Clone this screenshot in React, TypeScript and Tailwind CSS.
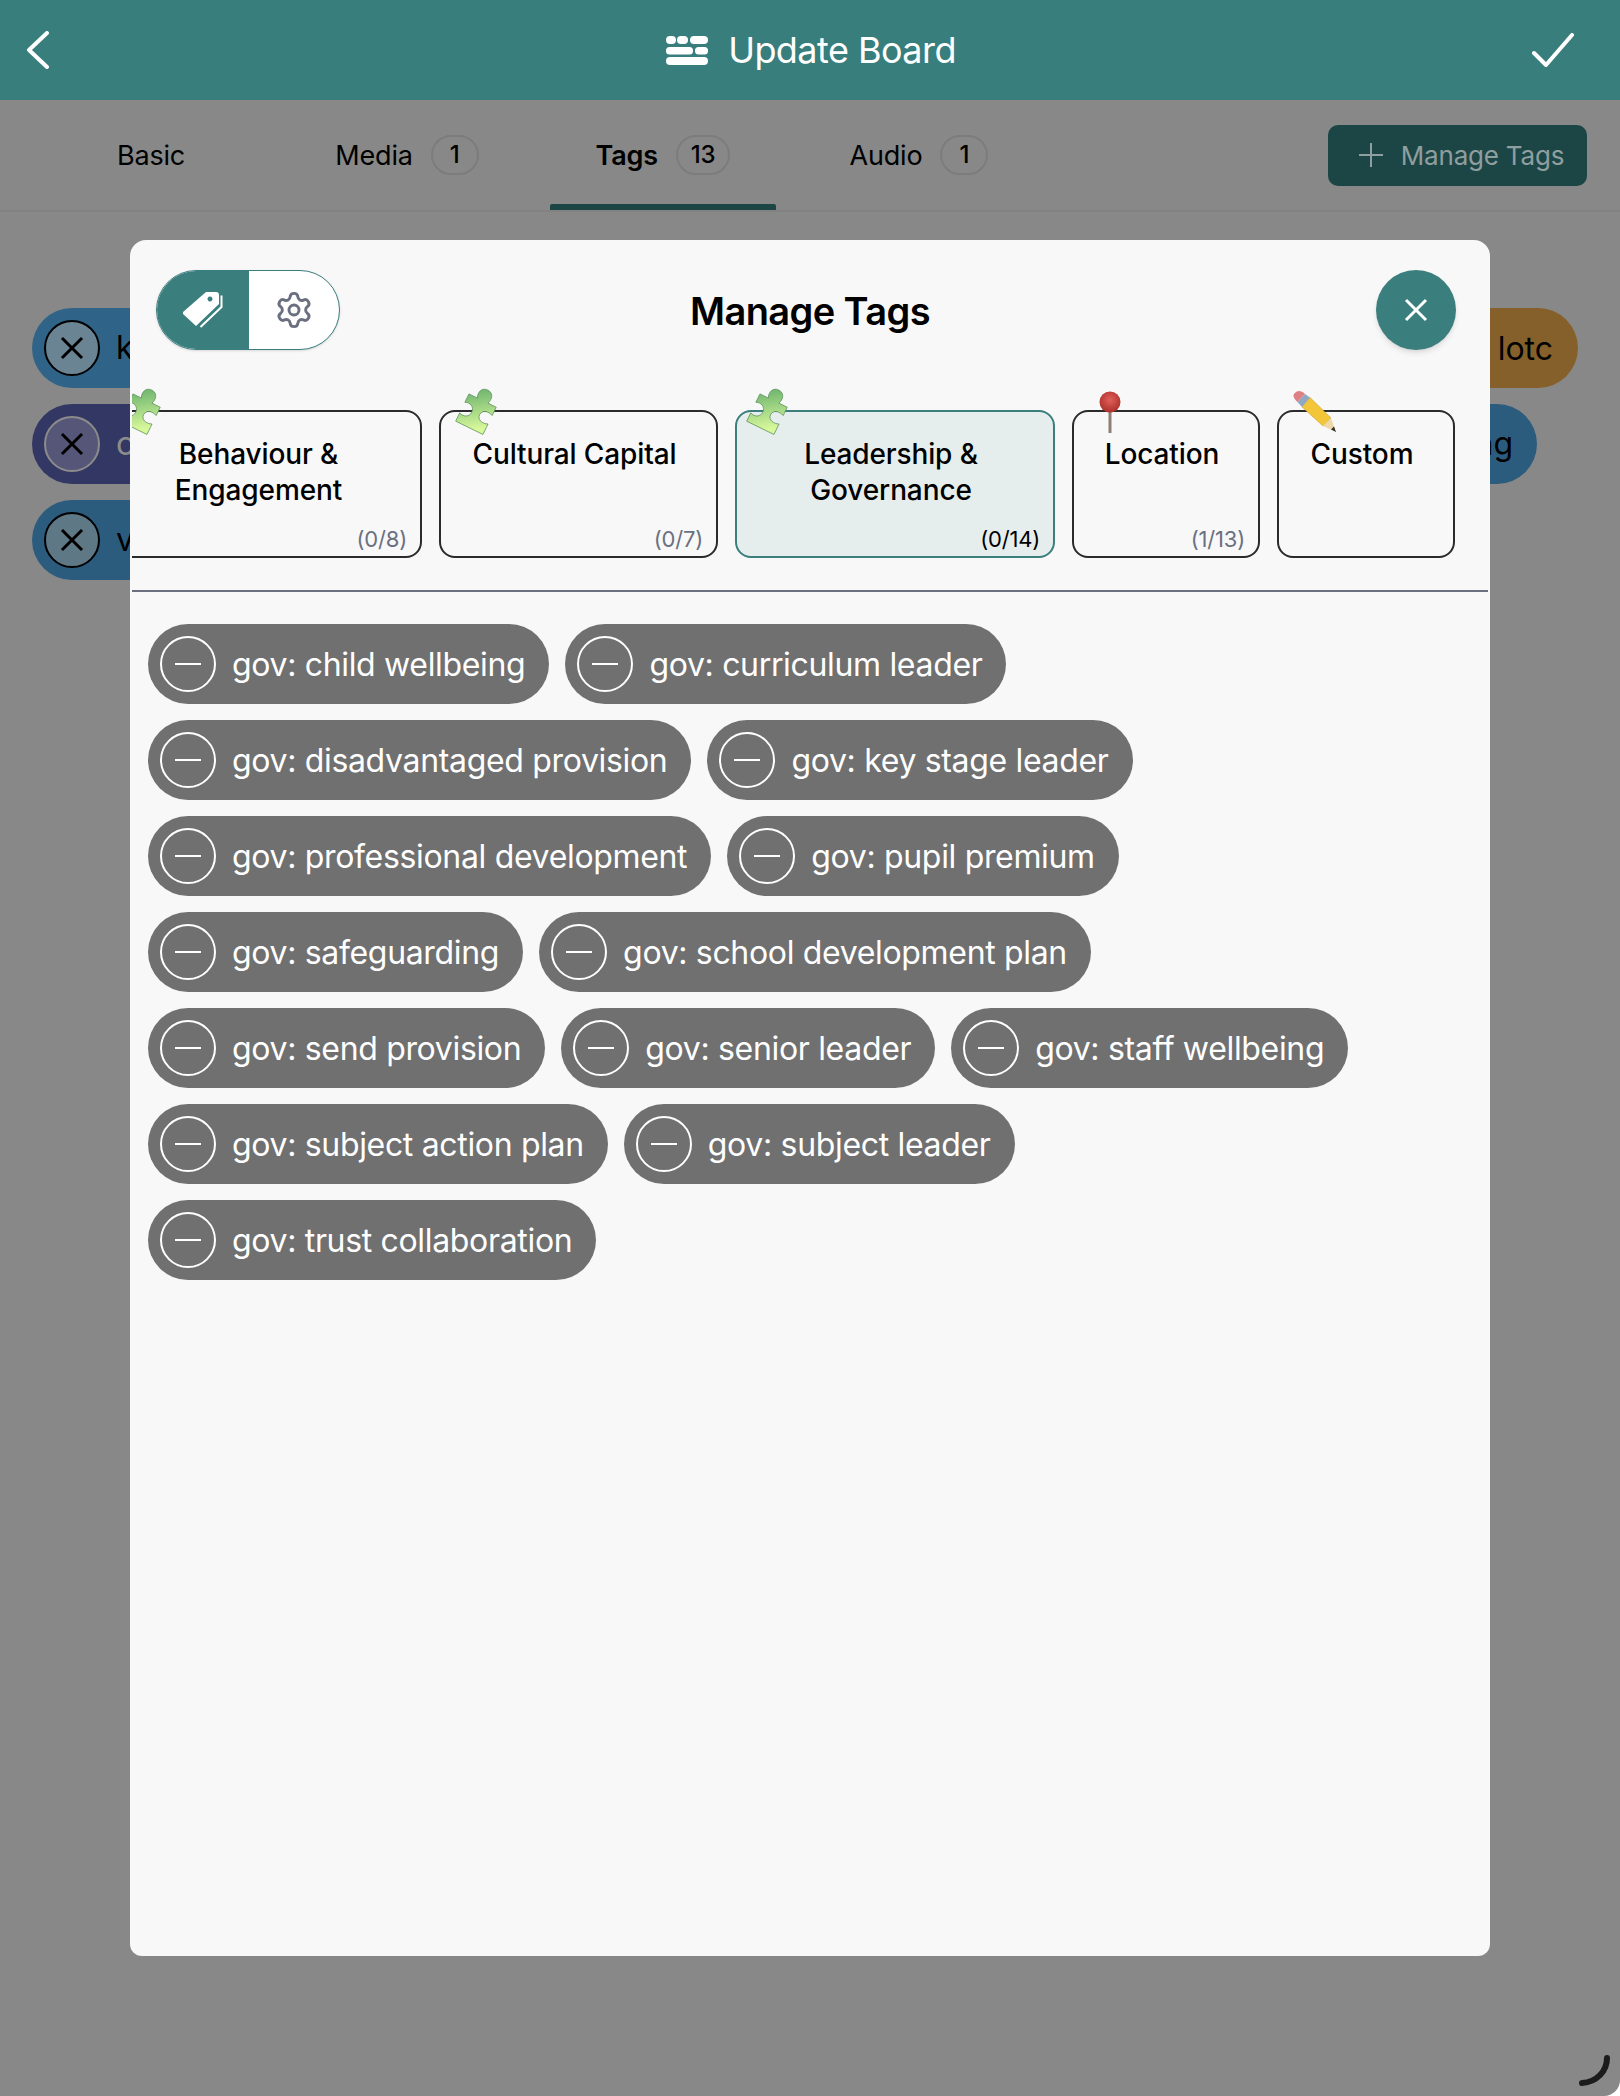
import React from "react";
import { Settings } from "lucide-react";

const Puzzle = ({ id }: { id: string }) => (
  <svg viewBox="0 0 48 48" className="h-[56px] w-[56px]">
    <defs>
      <linearGradient id={id} x1="0" y1="0" x2="0" y2="1" gradientTransform="rotate(-26 0.5 0.5)">
        <stop offset="0" stopColor="#6fb56f" />
        <stop offset="1" stopColor="#d6f79a" />
      </linearGradient>
    </defs>
    <g transform="rotate(26 24 24)">
      <path
        d="M11 15 H19 C17 11 18 5 24 5 C30 5 31 11 29 15 H37 V23 C33 21 27 22 27 27 C27 32 33 33 37 31 V41 H11 V33 C15 35 20 33 20 28 C20 23 15 21 11 23 Z"
        fill={`url(#${id})`}
        stroke="#5d8f5d"
        strokeWidth="0.6"
      />
    </g>
  </svg>
);

const Pin = () => (
  <svg viewBox="0 0 24 42" className="h-[42px] w-[24px]">
    <defs>
      <radialGradient id="pn" cx="0.5" cy="0.4" r="0.6">
        <stop offset="0" stopColor="#e0605a" />
        <stop offset="1" stopColor="#ad2f2a" />
      </radialGradient>
    </defs>
    <rect x="10.5" y="18" width="3" height="24" fill="#8f7f78" />
    <circle cx="12" cy="11" r="10.5" fill="url(#pn)" />
  </svg>
);

const Pencil = () => (
  <svg viewBox="0 0 46 42" className="h-[42px] w-[46px]">
    <path d="M17 7.5 L38 28 L30 36 L9 17 Z" fill="#f3c63a" stroke="#c3961f" strokeWidth="0.5" />
    <path d="M38 28 L43 42 L30 36 Z" fill="#eed8a8" />
    <path d="M43 42 L38 39.6 L41 36.5 Z" fill="#333333" />
    <path d="M4.5 12 L12 4 L17 7.5 L9 17 Z" fill="#8fa8c4" />
    <path d="M4.5 12 C0 8 -0.5 5 2 3 C4 0.5 8 0 12 4 Z" fill="#dd8086" />
  </svg>
);

const Card = ({
  w,
  lines,
  count,
  icon,
  active,
}: {
  w: string;
  lines: string[];
  count?: string;
  icon: React.ReactNode;
  active?: boolean;
}) => (
  <div
    className={`relative h-[148px] shrink-0 rounded-[16px] border-2 pr-[8px] pt-[24px] text-center text-[28px] font-[450] leading-[36px] tracking-[-0.12px] text-black ${w} ${
      active ? "border-[#3a7e7d] bg-[#e6eeed]" : "border-[#2b2b2b] bg-[#f8f8f8]"
    }`}
  >
    {lines.map((l) => (
      <div key={l}>{l}</div>
    ))}
    {count && (
      <div
        className={`absolute bottom-[3px] right-[13px] text-[22px] font-normal leading-[28px] tracking-[-0.2px] ${
          active ? "text-black" : "text-[#6b7080]"
        }`}
      >
        {count}
      </div>
    )}
    {icon}
  </div>
);

const Pill = ({ label }: { label: string }) => (
  <div className="flex h-[80px] items-center rounded-full bg-[#707070] pl-[12px] pr-[24px] text-white">
    <div className="mr-[16px] flex h-[56px] w-[56px] items-center justify-center rounded-full border-2 border-white">
      <div className="h-[2px] w-[26px] bg-white" />
    </div>
    <span className="pt-[2px] text-[32px] leading-none tracking-[-0.33px]">{label}</span>
  </div>
);

const BackChip = ({
  bg,
  circle,
  border,
  text,
  textColor,
  w,
}: {
  bg: string;
  circle: string;
  border: string;
  text: string;
  textColor: string;
  w: string;
}) => (
  <div className={`flex h-[80px] items-center rounded-full pl-[12px] ${bg} ${w}`}>
    <div className={`mr-[16px] flex h-[56px] w-[56px] items-center justify-center rounded-full border-2 ${circle} ${border}`}>
      <svg viewBox="0 0 24 24" className="h-[24px] w-[24px]" stroke="#000" strokeWidth="3" strokeLinecap="square">
        <path d="M3 3 L21 21 M21 3 L3 21" />
      </svg>
    </div>
    <span className={`text-[32px] leading-none ${textColor}`}>{text}</span>
  </div>
);

const tags = [
  "gov: child wellbeing",
  "gov: curriculum leader",
  "gov: disadvantaged provision",
  "gov: key stage leader",
  "gov: professional development",
  "gov: pupil premium",
  "gov: safeguarding",
  "gov: school development plan",
  "gov: send provision",
  "gov: senior leader",
  "gov: staff wellbeing",
  "gov: subject action plan",
  "gov: subject leader",
  "gov: trust collaboration",
];

const Tab = ({ label, badge, active }: { label: string; badge?: string; active?: boolean }) => (
  <div className={`relative flex h-full w-[226px] items-center justify-center gap-[18px] text-[27px] tracking-[-0.2px] text-black ${active ? "font-semibold" : ""}`}>
    <span className="pt-[2px]">{label}</span>
    {badge && (
      <span className="flex h-[40px] min-w-[48px] items-center justify-center rounded-full border-2 border-[#7c7c7c] px-[13px] text-[24px] font-medium">
        {badge}
      </span>
    )}
    {active && <div className="absolute bottom-0 left-0 right-0 h-[6px] rounded-t-[2px] bg-[#1c4646]" />}
  </div>
);

export default function App() {
  return (
    <div
      className="relative flex h-[2096px] w-[1620px] flex-col overflow-hidden rounded-br-[16px] bg-[#888888]"
      style={{ fontFamily: "Inter, 'Noto Sans', sans-serif" }}
    >
      {/* Header */}
      <div className="flex h-[100px] shrink-0 items-center bg-[#387e7c] pl-[26px] pr-[46px] text-white">
        <div className="flex flex-1 items-center">
          <svg viewBox="0 0 24 38" className="h-[38px] w-[24px]" fill="none" stroke="#fff" strokeWidth="4" strokeLinecap="round" strokeLinejoin="round">
            <path d="M21 2 L3 19 L21 36" />
          </svg>
        </div>
        <div className="flex items-center gap-[20px] pl-[22px]">
          <svg viewBox="0 0 42 29" className="h-[29px] w-[42px]" fill="#fff">
            <rect x="0" y="0" width="10" height="8" rx="4" />
            <rect x="11" y="0" width="11" height="8" rx="4" />
            <rect x="24" y="0" width="18" height="8" rx="4" />
            <rect x="0" y="11" width="27" height="7.5" rx="3.5" />
            <rect x="29" y="11" width="13" height="7.5" rx="3.5" />
            <rect x="0" y="21" width="42" height="8" rx="4" />
          </svg>
          <span className="text-[36px] leading-none tracking-[-0.55px]">Update Board</span>
        </div>
        <div className="flex flex-1 items-center justify-end">
          <svg viewBox="0 0 42 34" className="h-[34px] w-[42px]" fill="none" stroke="#fff" strokeWidth="4" strokeLinecap="round" strokeLinejoin="round">
            <path d="M2 20 L14 32 L40 2" />
          </svg>
        </div>
      </div>

      {/* Tab bar */}
      <div className="flex h-[112px] shrink-0 items-center border-b-2 border-[#828282] pl-[38px] pr-[33px]">
        <div className="flex h-full gap-[30px]">
          <Tab label="Basic" />
          <Tab label="Media" badge="1" />
          <Tab label="Tags" badge="13" active />
          <Tab label="Audio" badge="1" />
        </div>
        <div className="ml-auto flex h-[61px] w-[259px] items-center justify-center gap-[18px] rounded-[10px] bg-[#1c4646] pl-[8px] text-[26px] tracking-[-0.2px] text-[#8f9e9e]">
          <svg viewBox="0 0 24 24" className="h-[24px] w-[24px]" stroke="#8f9e9e" strokeWidth="2">
            <path d="M12 0 V24 M0 12 H24" />
          </svg>
          <span>Manage Tags</span>
        </div>
      </div>

      {/* Board chips behind the modal */}
      <div className="flex flex-col gap-[16px] pl-[32px] pr-[42px] pt-[96px]">
        <div className="flex items-center justify-between">
          <BackChip bg="bg-[#2f6488]" circle="bg-[#6a8494]" border="border-black" text="key stage" textColor="text-black" w="w-[400px]" />
          <div className="flex h-[80px] items-center rounded-r-full bg-[#85602a] pl-[60px] pr-[25px] pt-[2px] text-[32px] text-black">lotc</div>
        </div>
        <div className="flex items-center justify-between pr-[41px]">
          <BackChip bg="bg-[#333763]" circle="bg-[#565678]" border="border-[#8c8c8c]" text="curriculum" textColor="text-[#8c8c8c]" w="w-[400px]" />
          <div className="flex h-[80px] items-center rounded-r-full bg-[#2c5c7d] pl-[60px] pr-[24px] text-[32px] text-black">ing</div>
        </div>
        <div className="flex items-center">
          <BackChip bg="bg-[#2c5c7d]" circle="bg-[#5f7886]" border="border-black" text="values" textColor="text-black" w="w-[400px]" />
        </div>
      </div>

      {/* Modal */}
      <div className="absolute left-[130px] top-[240px] flex h-[1716px] w-[1360px] flex-col rounded-b-[12px] rounded-t-[16px] bg-[#f8f8f8]">
        <div className="relative flex h-[138px] shrink-0 items-start pl-[26px] pr-[34px] pt-[30px]">
          <div className="flex h-[80px] w-[184px] overflow-hidden rounded-full border border-[#3a7e7d] bg-white shadow-sm">
            <div className="flex w-[92px] items-center justify-center bg-[#3a7e7d]">
              <svg viewBox="0 0 40 36" className="h-[36px] w-[40px]">
                <path d="M23 0 H33 Q36 0 36 3 V12 L13 34 L0 22 V20 Z M27 4.5 a2.5 2.5 0 1 0 0.01 0 Z" fill="#fff" fillRule="evenodd" />
                <path d="M38.5 3.5 V15 L17.5 35" fill="none" stroke="#fff" strokeWidth="2" />
              </svg>
            </div>
            <div className="flex flex-1 items-center justify-center">
              <Settings size={40} strokeWidth={1.75} color="#6b7080" />
            </div>
          </div>
          <div className="flex h-[80px] flex-1 items-center justify-center pr-[96px] pt-[2px] text-[38px] font-semibold tracking-[-0.6px] text-black">Manage Tags</div>
          <div className="flex h-[80px] w-[80px] items-center justify-center rounded-full bg-[#3a7e7d] shadow-md">
            <svg viewBox="0 0 24 24" className="h-[24px] w-[24px]" stroke="#fff" strokeWidth="3">
              <path d="M2 2 L22 22 M22 2 L2 22" />
            </svg>
          </div>
        </div>

        <div className="mx-[2px] overflow-hidden">
          <div className="ml-[-29px] flex gap-[17px] pb-[32px] pt-[32px]">
            <Card w="w-[319px]" lines={["Behaviour &", "Engagement"]} count="(0/8)" icon={<div className="absolute left-[9px] top-[-30px]"><Puzzle id="pz1" /></div>} />
            <Card w="w-[279px]" lines={["Cultural Capital"]} count="(0/7)" icon={<div className="absolute left-[9px] top-[-30px]"><Puzzle id="pz2" /></div>} />
            <Card w="w-[320px]" lines={["Leadership &", "Governance"]} count="(0/14)" active icon={<div className="absolute left-[4px] top-[-30px]"><Puzzle id="pz3" /></div>} />
            <Card w="w-[188px]" lines={["Location"]} count="(1/13)" icon={<div className="absolute left-[24px] top-[-21px]"><Pin /></div>} />
            <Card w="w-[178px]" lines={["Custom"]} icon={<div className="absolute left-[14px] top-[-22px]"><Pencil /></div>} />
          </div>
        </div>

        <div className="mx-[2px] flex flex-wrap content-start gap-[16px] border-t-2 border-[#6b7080] px-[16px] pt-[32px]">
          {tags.map((t) => (
            <Pill key={t} label={t} />
          ))}
        </div>
      </div>

      {/* Resize handle */}
      <svg viewBox="0 0 32 32" className="absolute bottom-[9px] right-[9px] h-[32px] w-[32px]" fill="none" stroke="#1c1c1c" strokeWidth="6" strokeLinecap="round">
        <path d="M28 3 C28 16 18 27 3 28" />
      </svg>
    </div>
  );
}
